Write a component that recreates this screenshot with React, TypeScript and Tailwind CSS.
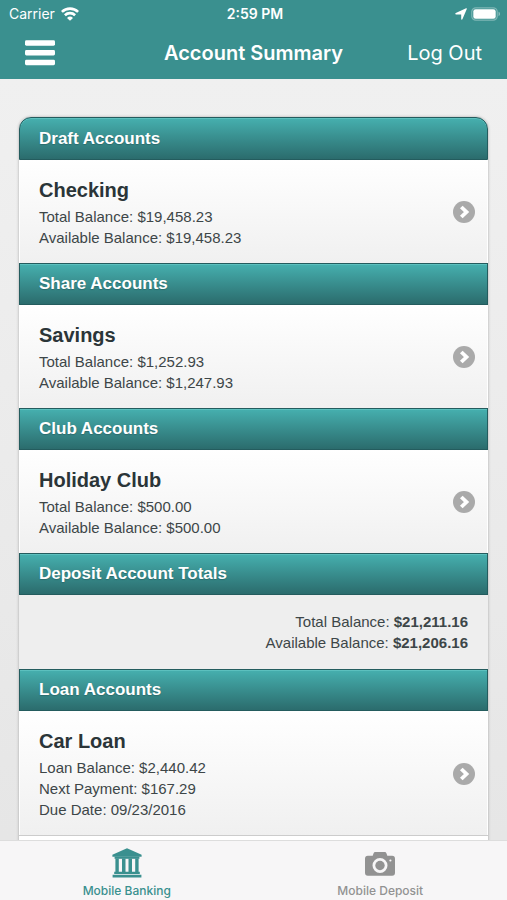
import React from 'react';

interface Line {
    label: string;
    value: string;
}

interface Account {
    name: string;
    lines: Line[];
}

interface AccountGroup {
    title: string;
    accounts: Account[];
}

const depositGroups: AccountGroup[] = [
    {
        title: 'Draft Accounts',
        accounts: [
            {
                name: 'Checking',
                lines: [
                    { label: 'Total Balance', value: '$19,458.23' },
                    { label: 'Available Balance', value: '$19,458.23' },
                ],
            },
        ],
    },
    {
        title: 'Share Accounts',
        accounts: [
            {
                name: 'Savings',
                lines: [
                    { label: 'Total Balance', value: '$1,252.93' },
                    { label: 'Available Balance', value: '$1,247.93' },
                ],
            },
        ],
    },
    {
        title: 'Club Accounts',
        accounts: [
            {
                name: 'Holiday Club',
                lines: [
                    { label: 'Total Balance', value: '$500.00' },
                    { label: 'Available Balance', value: '$500.00' },
                ],
            },
        ],
    },
];

const depositTotals: Line[] = [
    { label: 'Total Balance', value: '$21,211.16' },
    { label: 'Available Balance', value: '$21,206.16' },
];

const loanGroup: AccountGroup = {
    title: 'Loan Accounts',
    accounts: [
        {
            name: 'Car Loan',
            lines: [
                { label: 'Loan Balance', value: '$2,440.42' },
                { label: 'Next Payment', value: '$167.29' },
                { label: 'Due Date', value: '09/23/2016' },
            ],
        },
    ],
};

const WifiIcon = () => (
    <svg width="18" height="14" viewBox="0 0 18 14" fill="none" stroke="white" strokeWidth="2.6">
        <path d="M0.9 4.9a11.6 11.6 0 0 1 16.2 0" />
        <path d="M3.9 8.2a7.3 7.3 0 0 1 10.2 0" />
        <path d="M9 13.8 6 10.9a4.3 4.3 0 0 1 6 0Z" fill="white" stroke="none" />
    </svg>
);

const LocationIcon = () => (
    <svg width="12" height="12" viewBox="0 0 12 12" fill="white">
        <path d="M11.8 0.9 7.4 11.3c-.3.6-1.2.5-1.2-.2V6.4H1c-.8 0-.9-.9-.2-1.3L11.1.3c.6-.2.9.1.7.6Z" />
    </svg>
);

const BatteryIcon = () => (
    <svg width="30" height="14" viewBox="0 0 30 14" fill="none">
        <rect x="0.8" y="0.8" width="25.4" height="12.4" rx="4" stroke="white" strokeOpacity="0.35" strokeWidth="1.2" />
        <rect x="2.3" y="2.3" width="22.4" height="9.4" rx="2.3" fill="white" />
        <path d="M27.6 4.8c1.6.6 1.6 3.8 0 4.4Z" fill="white" fillOpacity="0.5" />
    </svg>
);

const MenuIcon = () => (
    <svg width="30" height="26" viewBox="0 0 30 26" fill="white">
        <rect y="0.3" width="30" height="5.4" rx="1.4" />
        <rect y="10" width="30" height="5.4" rx="1.4" />
        <rect y="19.8" width="30" height="5.4" rx="1.4" />
    </svg>
);

const ChevronIcon = () => (
    <svg width="22" height="22" viewBox="0 0 22 22" fill="none" className="shrink-0">
        <circle cx="11" cy="11" r="11" fill="#aaaaaa" />
        <path d="m8.3 6 5.2 5-5.2 5" stroke="white" strokeWidth="3.8" />
    </svg>
);

const BankIcon = () => (
    <svg width="30" height="30" viewBox="0 0 30 30" fill="currentColor">
        <path d="M15 0.3 29.6 6.8v2H0.4v-2Z" />
        <path d="M2.6 8.5h24.8v2.3H2.6Z" />
        <path d="M3.4 10.5h3.4v13.7H3.4ZM10 10.5h3.5v13.7H10ZM16.5 10.5H20v13.7h-3.5ZM23.200 10.5h3.400v13.700h-3.400Z" />
        <path d="M2.200 23.700h25.600v2.200H2.200ZM0.6 26.700h28.800v2.900H0.600Z" />
    </svg>
);

const CameraIcon = () => (
    <svg width="30" height="24" viewBox="0 0 30 24" fill="currentColor">
        <path
            fillRule="evenodd"
            d="M10.2 0h9.6c.8 0 1.3.4 1.6 1.2l.9 2.6h4.8A2.9 2.9 0 0 1 30 6.7v14.1a2.9 2.9 0 0 1-2.9 2.9H2.9A2.9 2.9 0 0 1 0 20.8V6.7a2.9 2.9 0 0 1 2.9-2.9h4.8l.9-2.6C8.9.4 9.4 0 10.2 0ZM15 6a7.5 7.5 0 1 0 0 15 7.5 7.5 0 0 0 0-15Zm10.4 1.4a1.1 1.1 0 1 0 0 2.2 1.1 1.1 0 0 0 0-2.2Z"
        />
        <circle cx="15" cy="13.5" r="4.7" />
    </svg>
);

const SectionTitle = ({ children }: { children: React.ReactNode }) => (
    <h2 className="flex h-[42px] items-center border border-[#245c5e] bg-linear-to-b from-[#46b0af] to-[#2b6c6d] px-[19px] text-[17px] font-bold text-white inset-shadow-[0_1px_0_#5cc0be] [text-shadow:0_1px_1px_#2b6c6d] group-first/section:h-[43px] group-first/section:rounded-t-xl">
        {children}
    </h2>
);

const AccountRow = ({ account }: { account: Account }) => (
    <a
        href="#account"
        className="flex items-center justify-between border-x border-white bg-linear-to-b from-white to-[#f0f0f0] pt-4 pr-3 pb-[15px] pl-[19px]"
    >
        <div>
            <h3 className="text-xl leading-7 font-bold text-[#2b3538]">{account.name}</h3>
            <div className="mt-0.5">
                {account.lines.map((line) => (
                    <p key={line.label} className="leading-[21px]">
                        {line.label}: {line.value}
                    </p>
                ))}
            </div>
        </div>
        <ChevronIcon />
    </a>
);

const Group = ({ group }: { group: AccountGroup }) => (
    <section className="group/section">
        <SectionTitle>{group.title}</SectionTitle>
        {group.accounts.map((account) => (
            <AccountRow key={account.name} account={account} />
        ))}
    </section>
);

const App: React.FC = () => {
    return (
        <div className="flex h-screen flex-col bg-[#eeeeee] font-['Liberation_Sans',Arial,sans-serif] text-[15px] text-[#3d4648]">
            <header className="bg-[#3a908f] font-[Inter,sans-serif] text-white">
                <div className="grid h-[27px] grid-cols-3 items-center pr-1.5 pl-[9px] text-sm">
                    <div className="flex items-center gap-1.5">
                        Carrier
                        <WifiIcon />
                    </div>
                    <div className="text-center font-semibold">2:59 PM</div>
                    <div className="flex items-center justify-end gap-1">
                        <LocationIcon />
                        <BatteryIcon />
                    </div>
                </div>
                <div className="grid h-[52px] grid-cols-[1fr_auto_1fr] items-center px-[25px] text-xl">
                    <button type="button" aria-label="Menu" className="justify-self-start">
                        <MenuIcon />
                    </button>
                    <h1 className="font-semibold">Account Summary</h1>
                    <button type="button" className="justify-self-end">Log Out</button>
                </div>
            </header>

            <main className="min-h-0 flex-1 overflow-y-auto bg-linear-to-b from-[#f0f0f0] to-[#e6e6e6] px-[19px] pt-[38px] [scrollbar-width:none]">
                <div className="rounded-t-xl shadow-[0_0_3px_rgba(0,0,0,0.3)]">
                    {depositGroups.map((group) => (
                        <Group key={group.title} group={group} />
                    ))}
                    <section>
                        <SectionTitle>Deposit Account Totals</SectionTitle>
                        <div className="bg-[#eeeeee] px-5 py-4 text-right">
                            {depositTotals.map((line) => (
                                <p key={line.label} className="leading-[21px]">
                                    {line.label}: <strong>{line.value}</strong>
                                </p>
                            ))}
                        </div>
                    </section>
                    <Group group={loanGroup} />
                    <div className="h-4 border-t border-[#cccccc] bg-white" />
                </div>
            </main>

            <nav className="grid h-[60px] grid-cols-2 border-t border-[#dddddd] bg-[#f7f6f7] font-[Inter,sans-serif] text-xs font-medium">
                <a href="#banking" className="flex flex-col items-center justify-end text-[#3a908f]">
                    <BankIcon />
                    <span className="mt-1 leading-[18px]">Mobile Banking</span>
                </a>
                <a href="#deposit" className="flex flex-col items-center justify-end text-[#929292]">
                    <CameraIcon />
                    <span className="mt-1.5 leading-[18px]">Mobile Deposit</span>
                </a>
            </nav>
        </div>
    );
};

export default App;
